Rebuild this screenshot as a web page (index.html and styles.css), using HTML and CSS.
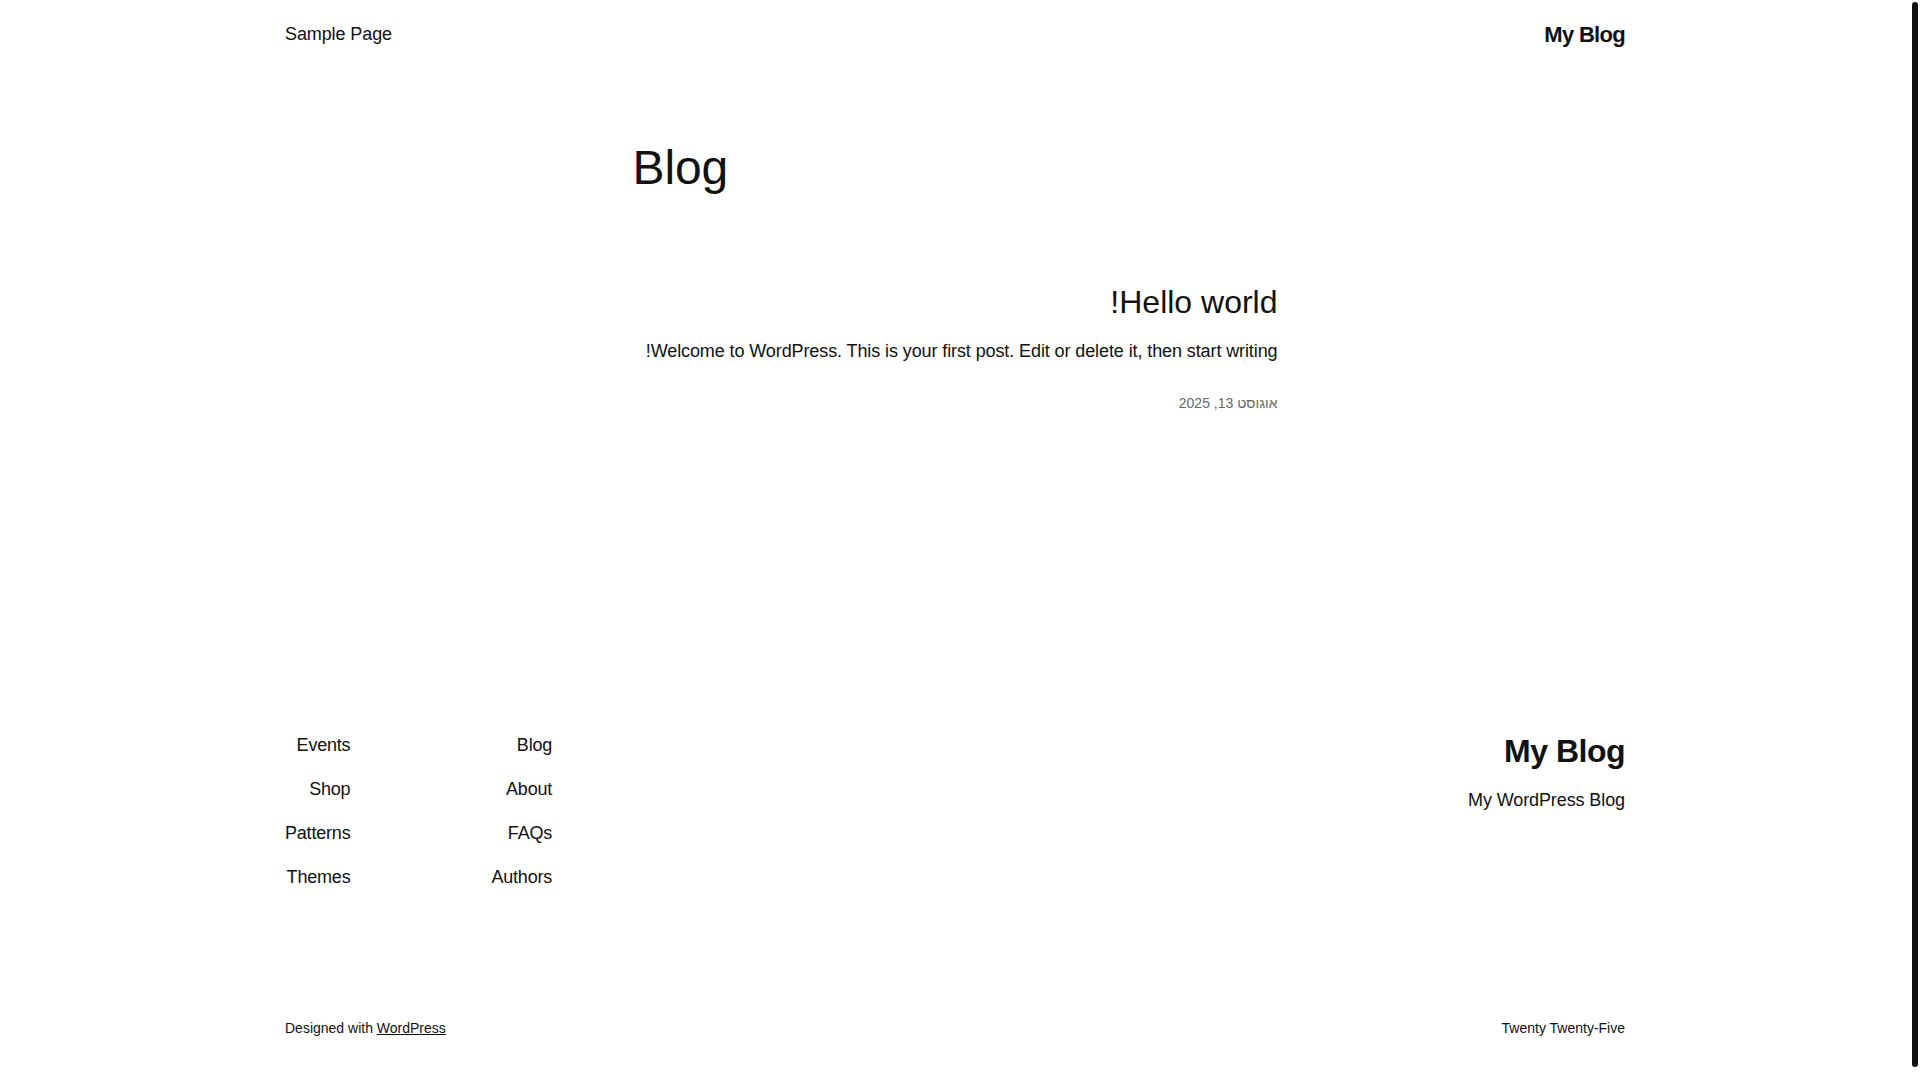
FILE: index.html
```html
<!DOCTYPE html>
<html lang="he" dir="rtl">

<head>
    <title>Blog – My Blog</title>
    <meta charset="UTF-8">
    <meta name="viewport" content="width=device-width, initial-scale=1.0">
    <link rel="stylesheet" href="styles.css">
</head>

<body>
    <header class="site-header">
        <a class="site-title" href="#">My Blog</a>
        <nav class="header-nav">
            <a href="#">Sample Page</a>
        </nav>
    </header>

    <main class="content">
        <h1 class="page-title">Blog</h1>

        <article class="post">
            <h2 class="post-title"><a href="#">Hello world!</a></h2>
            <p class="post-excerpt">Welcome to WordPress. This is your first post. Edit or delete it, then start writing!</p>
            <time class="post-date" datetime="2025-08-13">אוגוסט 13, 2025</time>
        </article>
    </main>

    <footer class="site-footer">
        <div class="footer-top">
            <div class="footer-brand">
                <a class="footer-title" href="#">My Blog</a>
                <p class="tagline">My WordPress Blog</p>
            </div>
            <div class="footer-navs">
                <ul class="footer-menu">
                    <li><a href="#">Blog</a></li>
                    <li><a href="#">About</a></li>
                    <li><a href="#">FAQs</a></li>
                    <li><a href="#">Authors</a></li>
                </ul>
                <ul class="footer-menu">
                    <li><a href="#">Events</a></li>
                    <li><a href="#">Shop</a></li>
                    <li><a href="#">Patterns</a></li>
                    <li><a href="#">Themes</a></li>
                </ul>
            </div>
        </div>

        <div class="footer-bottom">
            <p>Twenty Twenty-Five</p>
            <p>Designed with <a class="credit" href="#">WordPress</a></p>
        </div>
    </footer>

    <!-- the window's scrollbar, as it shows in the capture -->
    <div class="scroll-thumb" aria-hidden="true"></div>
</body>

</html>
```

FILE: styles.css
```css
body {
    font-family: "Liberation Sans", Arial, sans-serif;
    margin: 0 10px 0 0;
    color: #111;
    background: #fff;
    font-size: 18px;
    line-height: 1.4;
    letter-spacing: -0.1px;
}
a {
    color: inherit;
    text-decoration: none;
}
p {
    margin: 0;
}
.scroll-thumb {
    position: fixed;
    top: 2px;
    right: 2px;
    width: 6px;
    height: 1065px;
    background: #111;
    border-radius: 3px;
}
.site-header {
    width: 1340px;
    height: 70px;
    margin: 0 auto;
    display: flex;
    justify-content: space-between;
    align-items: center;
}
.site-title {
    font-size: 22px;
    font-weight: 700;
    letter-spacing: -0.7px;
    line-height: 1.125;
    margin-left: -2px;
}
.header-nav a {
    font-size: 18px;
}
.content {
    width: 645px;
    margin: 0 auto;
}
.page-title {
    font-size: 48px;
    font-weight: 400;
    line-height: 54px;
    text-align: left;
    margin: 71px 0 0;
}
.post-title {
    font-size: 32px;
    font-weight: 400;
    line-height: 36px;
    letter-spacing: 0;
    margin: 89px 0 0;
}
.post-excerpt {
    margin-top: 19px;
}
.post-date {
    display: block;
    margin-top: 30px;
    font-size: 14px;
    letter-spacing: 0;
    color: #686868;
}
.site-footer {
    width: 1340px;
    margin: 319px auto 0;
    padding-bottom: 57px;
}
.footer-top {
    display: flex;
    justify-content: space-between;
    align-items: flex-start;
}
.footer-title {
    display: block;
    font-size: 32px;
    font-weight: 700;
    line-height: 36px;
    letter-spacing: -0.5px;
}
.tagline {
    margin-top: 19px;
}
.footer-navs {
    display: flex;
    gap: 141px;
}
.footer-menu {
    list-style: none;
    margin: 0;
    padding: 0;
    display: flex;
    flex-direction: column;
    gap: 19px;
    letter-spacing: -0.2px;
}
.footer-bottom {
    display: flex;
    justify-content: space-between;
    margin-top: 128px;
    font-size: 14px;
    letter-spacing: 0;
}
.credit {
    text-decoration: underline;
}
```
